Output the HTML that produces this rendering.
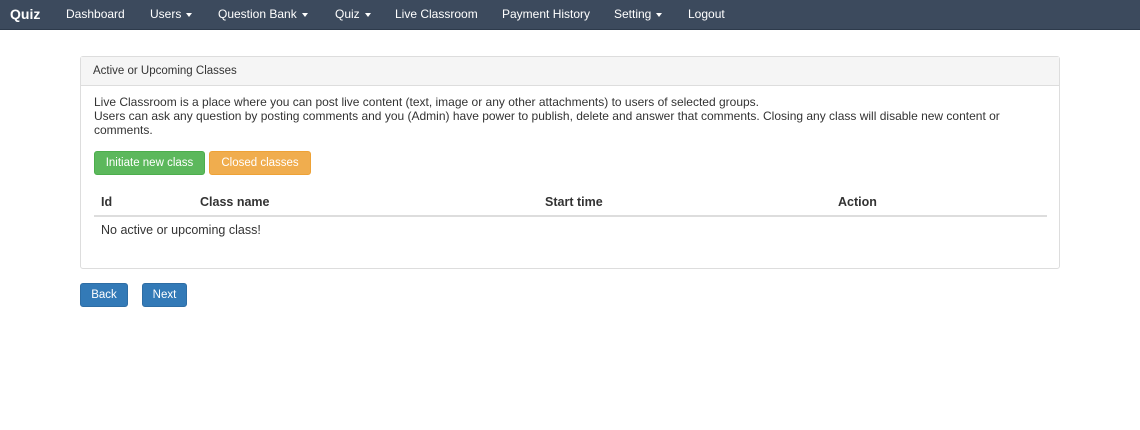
<!DOCTYPE html>
<html><head><style>
*{margin:0;padding:0;box-sizing:border-box}
body{width:1140px;height:430px;background:#fff;font-family:"Liberation Sans",Arial,sans-serif;color:#333;position:relative;overflow:hidden}
.nav{position:absolute;left:0;top:0;width:1140px;height:30px;background:#3c4a5d;border-bottom:1px solid #2d3a4b}
.nav span{position:absolute;top:7px;color:#fff;font-size:12px;white-space:nowrap}
.car{display:inline-block;width:0;height:0;border-left:3.5px solid transparent;border-right:3.5px solid transparent;border-top:4px solid #fff;vertical-align:middle;margin-left:5px}
.a{position:absolute;white-space:nowrap}
.panel{position:absolute;left:80px;top:56px;width:980px;height:213px;border:1px solid #ddd;border-radius:3px}
.ph{position:absolute;left:0;top:0;width:978px;height:29px;background:#f5f5f5;border-bottom:1px solid #ddd;font-size:11.5px;padding:8px 12px}
.btn{position:absolute;color:#fff;font-size:11.5px;text-align:center;border-radius:3px}
</style></head><body>
<div class="nav">
<span style="left:10px;top:6px;font-size:14px;font-weight:bold">Quiz</span>
<span style="left:66px">Dashboard</span>
<span style="left:150px">Users<i class="car"></i></span>
<span style="left:218px">Question Bank<i class="car"></i></span>
<span style="left:335px">Quiz<i class="car"></i></span>
<span style="left:395px">Live Classroom</span>
<span style="left:502px">Payment History</span>
<span style="left:614px">Setting<i class="car"></i></span>
<span style="left:688px">Logout</span>
</div>
<div class="panel"><div class="ph">Active or Upcoming Classes</div></div>
<div class="a" style="left:94px;top:95px;font-size:12px;line-height:14px">Live Classroom is a place where you can post live content (text, image or any other attachments) to users of selected groups.<br>Users can ask any question by posting comments and you (Admin) have power to publish, delete and answer that comments. Closing any class will disable new content or<br>comments.</div>
<div class="btn" style="left:94px;top:151px;width:111px;height:24px;background:#5cb85c;border:1px solid #4cae4c;padding-top:5px">Initiate new class</div>
<div class="btn" style="left:209px;top:151px;width:102px;height:24px;background:#f0ad4e;border:1px solid #eea236;padding-top:5px">Closed classes</div>
<div class="a" style="left:101px;top:195px;font-size:12.5px;font-weight:bold">Id</div>
<div class="a" style="left:200px;top:195px;font-size:12.5px;font-weight:bold">Class name</div>
<div class="a" style="left:545px;top:195px;font-size:12.5px;font-weight:bold">Start time</div>
<div class="a" style="left:838px;top:195px;font-size:12.5px;font-weight:bold">Action</div>
<div class="a" style="left:94px;top:215px;width:953px;height:2px;background:#ddd"></div>
<div class="a" style="left:101px;top:223px;font-size:12.5px">No active or upcoming class!</div>
<div class="btn" style="left:80px;top:283px;width:48px;height:24px;background:#337ab7;border:1px solid #2e6da4;padding-top:5px">Back</div>
<div class="btn" style="left:142px;top:283px;width:45px;height:24px;background:#337ab7;border:1px solid #2e6da4;padding-top:5px">Next</div>
</body></html>
